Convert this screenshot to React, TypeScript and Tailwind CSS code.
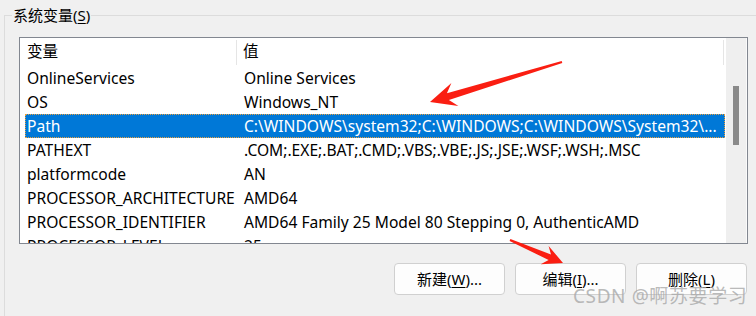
import React from 'react';

const rows = [
  { name: 'OnlineServices', value: 'Online Services' },
  { name: 'OS', value: 'Windows_NT' },
  { name: 'Path', value: 'C:\\WINDOWS\\system32;C:\\WINDOWS;C:\\WINDOWS\\System32\\...', selected: true },
  { name: 'PATHEXT', value: '.COM;.EXE;.BAT;.CMD;.VBS;.VBE;.JS;.JSE;.WSF;.WSH;.MSC' },
  { name: 'platformcode', value: 'AN' },
  { name: 'PROCESSOR_ARCHITECTURE', value: 'AMD64' },
  { name: 'PROCESSOR_IDENTIFIER', value: 'AMD64 Family 25 Model 80 Stepping 0, AuthenticAMD' },
  { name: 'PROCESSOR_LEVEL', value: '25' },
];

// tapered red arrow, from tail (x1,y1) to tip (x2,y2)
function arrowPoints(x1: number, y1: number, x2: number, y2: number, headLen: number, headW: number, tailW: number, neckW: number) {
  const dx = x2 - x1;
  const dy = y2 - y1;
  const L = Math.hypot(dx, dy);
  const ux = dx / L, uy = dy / L;
  const nx = -uy, ny = ux;
  const p = (t: number, s: number) => `${(x1 + ux * t + nx * s).toFixed(1)},${(y1 + uy * t + ny * s).toFixed(1)}`;
  return [
    p(0, tailW / 2),
    p(L - headLen * 0.72, neckW / 2),
    p(L - headLen, headW / 2),
    p(L, 0),
    p(L - headLen, -headW / 2),
    p(L - headLen * 0.72, -neckW / 2),
    p(0, -tailW / 2),
  ].join(' ');
}

function Btn({ label, hot, tail }: { label: string; hot: string; tail: string }) {
  return (
    <button className="w-[111px] h-[32px] rounded-[4px] border border-[#d0d0d0] bg-[#fdfdfd] text-[15px] text-black flex items-center justify-center">
      {label}(<span className="underline underline-offset-2">{hot}</span>){tail}
    </button>
  );
}

export default function App() {
  return (
    <div
      className="relative w-[756px] h-[316px] overflow-hidden bg-[#f0f0f0] text-black"
      style={{ fontFamily: '"Noto Sans", "Noto Sans CJK SC", sans-serif' }}
    >
      <fieldset className="ml-[4px] mt-[4px] h-[340px] border-t border-l border-[#dcdcdc]">
        <legend className="ml-[7px] px-px text-[15px] leading-[22px]">
          系统变量(<span className="underline underline-offset-2">S</span>)
        </legend>

        {/* variable list */}
        <div className="ml-[14px] mt-[11px] w-[729px] h-[207px] border border-[#828790] bg-white flex overflow-hidden">
          <div className="w-[706px] flex flex-col text-[15.6px]">
            <div className="h-[28px] flex items-center shrink-0">
              <div className="ml-[5px] w-[212px] pl-[2px] h-[25px] flex items-center border-r border-[#e5e5e5]">变量</div>
              <div className="w-[487px] pl-[6px] h-[25px] flex items-center border-r border-[#e5e5e5]">值</div>
            </div>
            {rows.map(r => (
              <div
                key={r.name}
                className={
                  'ml-[5px] w-[700px] h-[24px] pt-px flex items-center shrink-0 whitespace-nowrap ' +
                  (r.selected ? 'bg-[#0078d7] text-white outline-1 outline-dotted outline-[#e8a040] -outline-offset-1' : '')
                }
              >
                <div className="w-[217px] pl-[2px]">{r.name}</div>
                <div className="flex-1 pl-[2px]">{r.value}</div>
              </div>
            ))}
          </div>
          {/* scrollbar */}
          <div className="w-[21px] bg-[#efefef] border-r border-[#fafafa] pt-[48px] pl-[7px]">
            <div className="w-[6px] h-[59px] bg-[#8a8a8a]" />
          </div>
        </div>

        <div className="mt-[19px] mr-[9px] flex justify-end gap-[10px]">
          <Btn label="新建" hot="W" tail="..." />
          <Btn label="编辑" hot="I" tail="..." />
          <Btn label="删除" hot="L" tail="" />
        </div>
      </fieldset>

      {/* watermark */}
      <div className="absolute left-[573px] top-[283px] text-[19px] tracking-[0.6px] leading-[26px] text-[#a8a8a8]/80 whitespace-nowrap">
        CSDN @啊苏要学习
      </div>

      {/* annotation arrows */}
      <svg className="absolute inset-0 pointer-events-none" width="756" height="316" viewBox="0 0 756 316">
        <polygon points={arrowPoints(562, 62, 430, 102, 26, 24, 2, 7)} fill="#fa1e12" />
        <polygon points={arrowPoints(510, 240, 563, 263, 20, 20, 2, 6)} fill="#fa1e12" />
      </svg>
    </div>
  );
}
